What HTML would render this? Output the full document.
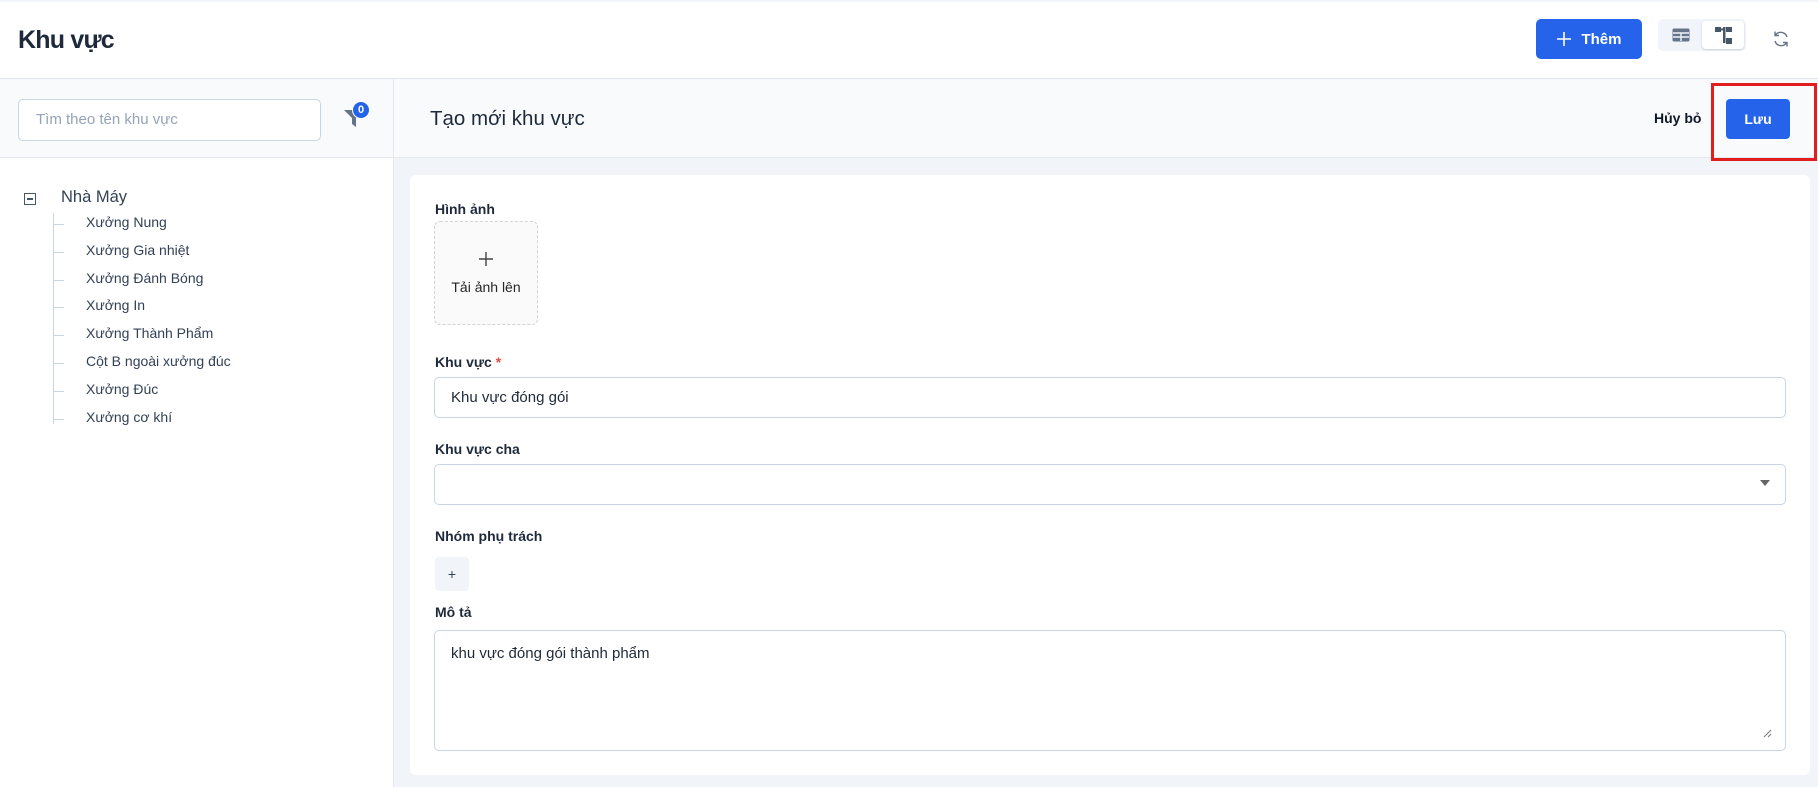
<!DOCTYPE html>
<html><head><meta charset="utf-8"><style>
*{box-sizing:border-box;margin:0;padding:0}
body{width:1818px;height:787px;overflow:hidden;font-family:"Liberation Sans",sans-serif;background:#fff;color:#1e293b;position:relative}
.a{position:absolute}
</style></head><body>
<div class="a" style="left:0;top:0;width:1818px;height:2px;background:#f1f5f9"></div>
<div class="a" style="left:18px;top:26px;font-size:25px;font-weight:bold;color:#1e293b;letter-spacing:-0.8px">Khu vực</div>
<div class="a" style="left:1536px;top:19px;width:106px;height:40px;background:#2563eb;border-radius:5px;color:#fff;font-size:15px;font-weight:bold;display:flex;align-items:center;justify-content:center;gap:9px"><svg width="16" height="16" viewBox="0 0 16 16"><path d="M8 1v14M1 8h14" stroke="#fff" stroke-width="1.6"/></svg>Thêm</div>
<div class="a" style="left:1658px;top:19px;width:88px;height:32px;background:#f1f5f9;border-radius:5px"></div>
<div class="a" style="left:1702px;top:21px;width:42px;height:28px;background:#fff;border-radius:4px;box-shadow:0 1px 2px rgba(0,0,0,.15)"></div>
<svg class="a" style="left:1672px;top:28px" width="18" height="14" viewBox="0 0 18 14"><rect x="0.5" y="0.5" width="17" height="13" rx="1.5" fill="#64748b"/><path d="M1 5h16M1 9h16M9 5v8" stroke="#f1f5f9" stroke-width="1.4"/></svg>
<svg class="a" style="left:1714px;top:27px" width="19" height="17" viewBox="0 0 19 17"><rect x="1" y="0" width="6" height="5" fill="#475569"/><rect x="12" y="0" width="6" height="5" fill="#475569"/><rect x="12" y="11" width="6" height="6" fill="#475569"/><rect x="9" y="0" width="2.5" height="16" fill="#475569"/><rect x="6" y="1.5" width="4" height="2" fill="#475569"/></svg>
<svg class="a" style="left:1772px;top:30px" width="18" height="18" viewBox="0 0 18 18" fill="none" stroke="#64748b" stroke-width="1.4"><path d="M15 7A6.5 6.5 0 0 0 3.5 5M3 11a6.5 6.5 0 0 0 11.5 2"/><path d="M3 1.5v4h4M15 16.5v-4h-4"/></svg>
<div class="a" style="left:0;top:78px;width:1818px;height:1px;background:#e2e8f0"></div>
<div class="a" style="left:0;top:79px;width:394px;height:79px;background:#f8fafc"></div>
<div class="a" style="left:393px;top:79px;width:1px;height:708px;background:#e2e8f0"></div>
<div class="a" style="left:0;top:157px;width:394px;height:1px;background:#e2e8f0"></div>
<div class="a" style="left:18px;top:99px;width:303px;height:42px;background:#fff;border:1px solid #cbd5e1;border-radius:5px;padding-left:17px;line-height:40px;font-size:15px;color:#94a3b8">Tìm theo tên khu vực</div>
<svg class="a" style="left:344px;top:107px" width="22" height="22" viewBox="0 0 22 22"><path d="M0 3h20l-8 8v9l-4-3v-6z" fill="#64748b"/></svg>
<div class="a" style="left:352px;top:101px;width:18px;height:18px;background:#2563eb;border-radius:50%;color:#fff;font-size:11px;font-weight:bold;text-align:center;line-height:16px;border:1px solid #fff">0</div>
<div class="a" style="left:24px;top:193px;width:12px;height:12px;border:1px solid #475569"></div>
<div class="a" style="left:27px;top:198px;width:6px;height:1.5px;background:#475569"></div>
<div class="a" style="left:61px;top:188px;font-size:16.5px;color:#334155">Nhà Máy</div>
<div class="a" style="left:53px;top:213px;width:1px;height:211px;background:#cbd5e1"></div>
<div class="a" style="left:54px;top:0;font-size:14px;color:#334155;line-height:27.8px">
<div style="position:absolute;top:209px;left:0;width:400px">
<div style="position:relative;padding-left:32px">Xưởng Nung<span style="position:absolute;left:0;top:15px;width:10px;height:1px;background:#cbd5e1"></span></div>
<div style="position:relative;padding-left:32px">Xưởng Gia nhiệt<span style="position:absolute;left:0;top:15px;width:10px;height:1px;background:#cbd5e1"></span></div>
<div style="position:relative;padding-left:32px">Xưởng Đánh Bóng<span style="position:absolute;left:0;top:15px;width:10px;height:1px;background:#cbd5e1"></span></div>
<div style="position:relative;padding-left:32px">Xưởng In<span style="position:absolute;left:0;top:15px;width:10px;height:1px;background:#cbd5e1"></span></div>
<div style="position:relative;padding-left:32px">Xưởng Thành Phẩm<span style="position:absolute;left:0;top:15px;width:10px;height:1px;background:#cbd5e1"></span></div>
<div style="position:relative;padding-left:32px">Cột B ngoài xưởng đúc<span style="position:absolute;left:0;top:15px;width:10px;height:1px;background:#cbd5e1"></span></div>
<div style="position:relative;padding-left:32px">Xưởng Đúc<span style="position:absolute;left:0;top:15px;width:10px;height:1px;background:#cbd5e1"></span></div>
<div style="position:relative;padding-left:32px">Xưởng cơ khí<span style="position:absolute;left:0;top:15px;width:10px;height:1px;background:#cbd5e1"></span></div>
</div></div>
<div class="a" style="left:394px;top:79px;width:1424px;height:79px;background:#f8fafc"></div>
<div class="a" style="left:394px;top:157px;width:1424px;height:1px;background:#e2e8f0"></div>
<div class="a" style="left:394px;top:158px;width:1424px;height:629px;background:#f1f5f9"></div>
<div class="a" style="left:430px;top:107px;font-size:20.5px;color:#1e293b">Tạo mới khu vực</div>
<div class="a" style="left:1654px;top:110px;font-size:14px;font-weight:bold;color:#0f172a">Hủy bỏ</div>
<div class="a" style="left:1726px;top:99px;width:64px;height:40px;background:#2563eb;border-radius:4px;color:#fff;font-size:14px;font-weight:bold;text-align:center;line-height:40px">Lưu</div>
<div class="a" style="left:1711px;top:83px;width:106px;height:78px;border:3px solid #e11d1d"></div>
<div class="a" style="left:410px;top:175px;width:1400px;height:600px;background:#fff;border-radius:6px"></div>
<div class="a" style="left:435px;top:201px;font-size:14px;font-weight:bold;color:#1e293b">Hình ảnh</div>
<div class="a" style="left:434px;top:221px;width:104px;height:104px;border:1px dashed #d4d4d8;border-radius:6px;background:#fafafa"></div>
<svg class="a" style="left:479px;top:252px" width="14" height="14" viewBox="0 0 14 14"><path d="M7 0v14M0 7h14" stroke="#444" stroke-width="1.4"/></svg>
<div class="a" style="left:434px;top:279px;width:104px;text-align:center;font-size:14px;color:#262626">Tải ảnh lên</div>
<div class="a" style="left:435px;top:354px;font-size:14px;font-weight:bold;color:#1e293b">Khu vực <span style="color:#ef4444">*</span></div>
<div class="a" style="left:434px;top:377px;width:1352px;height:41px;border:1px solid #cbd5e1;border-radius:5px;padding-left:16px;line-height:39px;font-size:15px;color:#1f2937">Khu vực đóng gói</div>
<div class="a" style="left:435px;top:441px;font-size:14px;font-weight:bold;color:#1e293b">Khu vực cha</div>
<div class="a" style="left:434px;top:464px;width:1352px;height:41px;border:1px solid #cbd5e1;border-radius:5px"></div>
<svg class="a" style="left:1760px;top:480px" width="10" height="6" viewBox="0 0 10 6"><path d="M0 0h10L5 6z" fill="#666"/></svg>
<div class="a" style="left:435px;top:528px;font-size:14px;font-weight:bold;color:#1e293b">Nhóm phụ trách</div>
<div class="a" style="left:435px;top:557px;width:34px;height:34px;background:#f1f5f9;border-radius:4px;text-align:center;line-height:34px;font-size:14px;color:#334155">+</div>
<div class="a" style="left:435px;top:604px;font-size:14px;font-weight:bold;color:#1e293b">Mô tả</div>
<div class="a" style="left:434px;top:630px;width:1352px;height:121px;border:1px solid #cbd5e1;border-radius:5px;padding:14px 16px;font-size:15px;color:#1f2937">khu vực đóng gói thành phẩm</div>
<svg class="a" style="left:1762px;top:728px" width="10" height="10" viewBox="0 0 10 10"><path d="M9 2L2 9M9 6L6 9" stroke="#777" stroke-width="1"/></svg>
</body></html>
